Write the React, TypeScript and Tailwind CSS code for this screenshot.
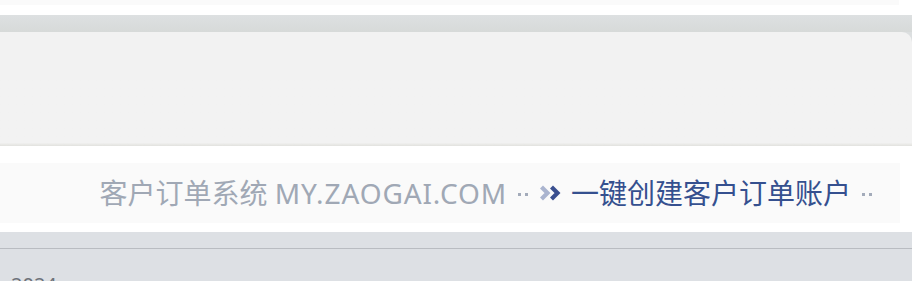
const Dots = ({ last }: { last?: boolean }) => (
    <span className={last ? 'ml-[11px] inline-flex shrink-0 items-center gap-[4px] self-center pt-[3px]' : 'mx-[11px] inline-flex shrink-0 items-center gap-[4px] self-center pt-[3px]'}>
        <span className="block h-[3px] w-[3px] bg-[#a3abba]" />
        <span className="block h-[3px] w-[3px] bg-[#a3abba]" />
    </span>
);

const DoubleChevron = () => (
    <svg width="23" height="16" viewBox="0 0 23 16" className="mr-[9px] shrink-0 self-center">
        <path d="M2.5 2 L8.5 8 L2.5 14" fill="none" stroke="#aab4cf" strokeWidth="4.2" />
        <path d="M12.5 2 L18.5 8 L12.5 14" fill="none" stroke="#3a4f8f" strokeWidth="4.2" />
    </svg>
);

export default function App() {
    return (
        <div className="w-[912px] h-[281px] overflow-hidden bg-white font-['Noto_Sans','Noto_Sans_CJK_SC',sans-serif]">
            <div className="h-[5px] w-[899px] bg-[#fafafa]" />
            <div className="h-[10px]" />
            <div className="bg-[#dcdfe0]">
                <div className="h-[17px] bg-gradient-to-b from-[#dde0e1] to-[#d7dad9]" />
                <div className="h-[114px] rounded-tr-[10px] bg-[#f2f2f2] bg-gradient-to-b from-[#f2f2f2] from-[97%] to-[#e2e2de]" />
            </div>
            <div className="pt-[17px] pb-[9px] bg-white">
                <div className="flex h-[60px] w-[900px] items-center justify-end whitespace-nowrap bg-[#fafafa] pr-[28px] text-[28px] leading-none">
                    <span className="text-[#a0a8b5]">
                        客户订单系统 <span className="tracking-[0.9px]">MY.ZAOGAI.COM</span>
                    </span>
                    <Dots />
                    <DoubleChevron />
                    <span className="text-[#35508f]">一键创建客户订单账户</span>
                    <Dots last />
                </div>
            </div>
            <div className="h-[49px] bg-[#dde0e4]">
                <div className="h-[16px]" />
                <div className="h-px bg-[#b9bcc1]" />
                <div className="pl-[11px] pt-[26px] text-[20px] leading-none text-[#6e737a]">2024</div>
            </div>
        </div>
    );
}
